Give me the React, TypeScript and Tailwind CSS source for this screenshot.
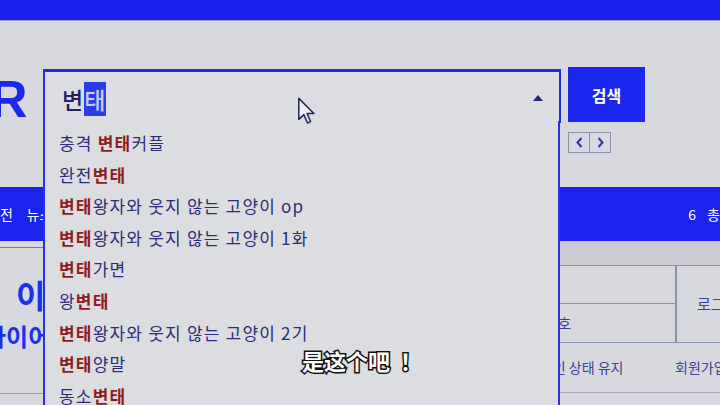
const suggestions: [string, string, string][] = [
  ["충격 ", "변태", "커플"],
  ["완전", "변태", ""],
  ["", "변태", "왕자와 웃지 않는 고양이 op"],
  ["", "변태", "왕자와 웃지 않는 고양이 1화"],
  ["", "변태", "가면"],
  ["왕", "변태", ""],
  ["", "변태", "왕자와 웃지 않는 고양이 2기"],
  ["", "변태", "양말"],
  ["동소", "변태", ""],
];

function Cursor() {
  return (
    <svg className="absolute z-20 left-[297px] top-[97px]" width="19" height="28" viewBox="0 0 13 20">
      <path
        d="M1 1 L1 16 L4.6 12.6 L7.2 18.6 L9.4 17.6 L6.9 11.8 L11.8 11.8 Z"
        fill="#f1f1f4"
        stroke="#26265e"
        strokeWidth="1.1"
        strokeLinejoin="round"
      />
    </svg>
  );
}

export default function App() {
  return (
    <div className="relative w-[720px] h-[405px] overflow-hidden bg-[#d8d9de] font-['Noto_Sans_CJK_KR','Noto_Sans',sans-serif]">
      <div className="h-[21px] bg-[#1b22ee] border-b border-[#9a9dcc]" />

      {/* header: logo, search box, button */}
      <div className="flex items-start mt-[46px]">
        <div className="w-[43px] h-[55px] overflow-hidden">
          <span className="block -ml-[10px] mt-[6px] text-[52px] leading-none font-black text-[#1b28ee] font-['Liberation_Sans',sans-serif]">
            R
          </span>
        </div>

        <div className="relative w-[518px] h-[54px] mt-[2px] border-2 border-t-[3px] border-[#1f2fe0] bg-[#dcdde2] flex items-center pl-[17px] pr-[16px] z-10">
          <span className="text-[23px] leading-[24px] font-medium text-[#1f1f6a] pt-[5px] tracking-[1px]">
            변<span className="bg-[#2a3de6] text-[#c9cdf5]">태</span>
          </span>
          <svg className="ml-auto mt-[2px]" width="10" height="6" viewBox="0 0 10 6">
            <path d="M5 0 L10 6 L0 6 Z" fill="#23237a" />
          </svg>

          {/* autocomplete list */}
          <div className="absolute left-[-2px] top-full w-[517px] h-[300px] border-x-2 border-[#2533e0] bg-[#dcdde1] pt-[6px]">
            {suggestions.map(([pre, hit, post], i) => (
              <div key={i} className="h-[31.6px] flex items-center pl-[14px] text-[17px] tracking-[1.2px] text-[#2d2c78] whitespace-pre">
                {pre}
                <span className="font-bold text-[#8c1d1d]">{hit}</span>
                {post}
              </div>
            ))}
          </div>
        </div>

        <div className="ml-[7px] flex flex-col">
          <button className="w-[77px] h-[55px] bg-[#1b26ee] text-white text-[16px] font-bold">검색</button>
          <div className="mt-[10px] flex w-[43px] h-[21px] border border-[#8e8fae]">
            <span className="flex-1 flex items-center justify-center border-r border-[#8e8fae]">
              <svg width="7" height="11" viewBox="0 0 7 11">
                <path d="M5.5 1 L1.5 5.5 L5.5 10" fill="none" stroke="#2a30c0" strokeWidth="2" />
              </svg>
            </span>
            <span className="flex-1 flex items-center justify-center">
              <svg width="7" height="11" viewBox="0 0 7 11">
                <path d="M1.5 1 L5.5 5.5 L1.5 10" fill="none" stroke="#2a30c0" strokeWidth="2" />
              </svg>
            </span>
          </div>
        </div>
      </div>

      {/* navigation bar */}
      <div className="mt-[34px] h-[54px] bg-[#1b24ee] flex items-center text-white text-[14px] whitespace-nowrap">
        <span className="w-[28px]">전</span>
        <span>뉴스</span>
        <span className="ml-[636px]">6</span>
        <span className="ml-[11px]">총</span>
      </div>

      {/* content */}
      <div className="flex">
        <div className="w-[43px] shrink-0 flex flex-col">
          <div className="mt-[6px] h-px bg-[#7074d2]" />
          <span className="mt-[30px] ml-[16px] text-[32px] leading-none font-bold text-[#1a30ee]">이</span>
          <span className="mt-[14px] -ml-[16px] text-[24px] leading-none font-bold text-[#1a30ee] whitespace-nowrap">
            다이어
          </span>
          <div className="mt-[45px] h-px bg-[#9a9bb4]" />
        </div>

        <div className="ml-auto w-[280px] shrink-0 overflow-hidden flex flex-col text-[15px] text-[#3c3fa0] whitespace-nowrap">
          <div className="h-[25px] bg-[#cbccd3] border-b border-[#8d8fae]" />
          <div className="flex h-[77px] border-b border-[#8d8fae]">
            <div className="w-[235px] shrink-0 flex flex-col">
              <div className="h-[38px] border-b border-[#8d8fae]" />
              <div className="flex-1 flex items-center pl-[76px]">비밀번호</div>
            </div>
            <div className="flex-1 flex items-center pl-[20px] border-l-2 border-[#8d8fae]">로그인</div>
          </div>
          <div className="h-[50px] flex items-center border-b border-[#a3a4ba]">
            <span className="w-[235px] shrink-0 pl-[87px] text-[14px]">로그인 상태 유지</span>
            <span className="text-[14px]">회원가입</span>
          </div>
        </div>
      </div>

      <Cursor />

      <div className="absolute z-20 left-[302px] top-[349px] flex text-[22px] leading-none font-bold text-white font-['Noto_Sans_CJK_SC',sans-serif] [-webkit-text-stroke:3px_#111] [paint-order:stroke_fill]">
        <span>是这个吧</span>
        <span className="ml-[10px]">！</span>
      </div>
    </div>
  );
}
